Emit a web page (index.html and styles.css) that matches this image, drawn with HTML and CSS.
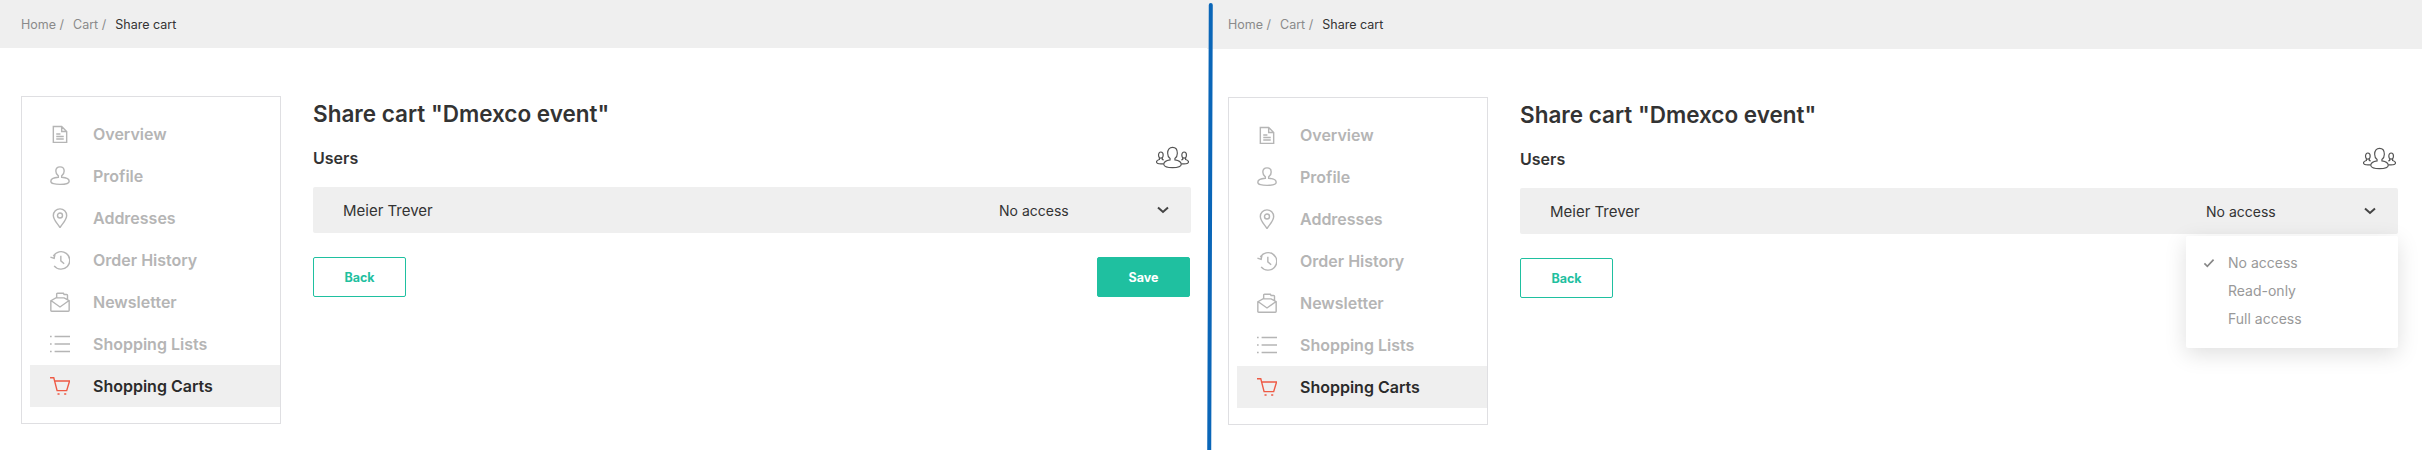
FILE: index.html
```html
<!DOCTYPE html>
<html lang="en">
<head>
  <meta charset="UTF-8" />
  <meta name="viewport" content="width=device-width, initial-scale=1.0" />
  <title>Share cart</title>
  <link rel="stylesheet" href="styles.css">
</head>
<body>
  <svg class="defs" aria-hidden="true">
    <symbol id="i-doc" viewBox="0 0 24 24"><path d="M4 3h10l6 6v13H4z M14 3v6h6 M7.5 12h5 M7.5 15h9 M7.5 18h9"/></symbol>
    <symbol id="i-user" viewBox="0 0 24 24"><path d="M12 1c3.4 0 5 2.500 5 5 0 2.600-1.500 4.800-3 5.800v1.700c5 .4 9 2.200 9 4.700 0 2.800-5 3.800-11 3.800S1 21.200 1 18.200c0-2.500 4-4.300 9-4.700v-1.700c-1.500-1-3-3.200-3-5.800 0-2.500 1.600-5 5-5z"/></symbol>
    <symbol id="i-pin" viewBox="0 0 24 24"><path d="M12 23.500C8 17.500 4 14 4 9a8 8 0 0 1 16 0c0 5-4 8.500-8 14.500z"/><circle cx="12" cy="9" r="3"/></symbol>
    <symbol id="i-history" viewBox="0 0 24 24"><path d="M4 7.500A10.500 10.500 0 1 1 5 19 M0.500 8.500l4.500 1.500 1-5 M13 7v6l4 3.500"/></symbol>
    <symbol id="i-mail" viewBox="0 0 24 24"><path d="M1 10.500l6-3.500h10l6 3.500V22q0 1-1 1H2q-1 0-1-1z M1.500 10.500l10.500 7.500 10.500-7.500 M8 7V2.500q0-1 1-1h7l1 1.500h3q1 0 1 1v5"/></symbol>
    <symbol id="i-list" viewBox="0 0 24 24"><path d="M5.500 3h18.500 M5.500 12h18.500 M5.500 21h18.500 M0 3h2 M0 12h2 M0 21h2"/></symbol>
    <symbol id="i-cart" viewBox="0 0 24 24"><path d="M0 2h4.500l4 15.500h11.500L23.500 6H5.500 M9 21.500h2.500 M17 21.500h2.500"/></symbol>
    <symbol id="i-users" viewBox="0 0 34 24"><path d="M17 1c3 0 5 2.400 5 6 0 2.600-1.200 4.500-2.500 5.500V14c4 .6 6.500 2 6.500 4.500 0 2.500-4 3.500-9 3.500s-9-1-9-3.500c0-2.500 2.500-3.900 6.500-4.500v-1.500C13.200 11.500 12 9.600 12 7c0-3.600 2-6 5-6z"/><ellipse cx="5" cy="9" rx="2.400" ry="3.200"/><ellipse cx="29" cy="9" rx="2.400" ry="3.200"/><path d="M3.500 12v1.500C1.500 14 .5 15 .5 16s1.500 2 4.500 2h3 M6.500 12v1.500l1.500.4 M30.500 12v1.500c2 .5 3 1.500 3 2.500s-1.500 2-4.500 2h-3 M27.500 12v1.500l-1.500.4"/></symbol>
    <symbol id="i-chevron" viewBox="0 0 12 8"><path d="M1 1.500l5 4.500 5-4.500"/></symbol>
    <symbol id="i-check" viewBox="0 0 14 12"><path d="M1.500 6.500l3.500 3.500 7.500-8"/></symbol>
  </svg>

  <div class="screens">
    <section class="screen screen-closed">
      <div class="crumbs"><a>Home /</a><a>Cart /</a><span>Share cart</span></div>
      <div class="content">
        <ul class="side">
          <li><svg class="ico"><use href="#i-doc"/></svg>Overview</li>
          <li><svg class="ico"><use href="#i-user"/></svg>Profile</li>
          <li><svg class="ico"><use href="#i-pin"/></svg>Addresses</li>
          <li><svg class="ico"><use href="#i-history"/></svg>Order History</li>
          <li><svg class="ico"><use href="#i-mail"/></svg>Newsletter</li>
          <li><svg class="ico"><use href="#i-list"/></svg>Shopping Lists</li>
          <li class="active"><svg class="ico"><use href="#i-cart"/></svg>Shopping Carts</li>
        </ul>
        <div class="main">
          <h1>Share cart "Dmexco event"</h1>
          <div class="users-head">
            <h2>Users</h2>
            <svg class="users-ico"><use href="#i-users"/></svg>
          </div>
          <div class="user-row">
            <span class="user-name">Meier Trever</span>
            <span class="access">No access</span>
            <svg class="chevron"><use href="#i-chevron"/></svg>
          </div>
          <div class="actions">
            <button class="btn btn-back">Back</button>
            <button class="btn btn-save">Save</button>
          </div>
        </div>
      </div>
    </section>

    <section class="screen screen-open">
      <div class="crumbs"><a>Home /</a><a>Cart /</a><span>Share cart</span></div>
      <div class="content">
        <ul class="side">
          <li><svg class="ico"><use href="#i-doc"/></svg>Overview</li>
          <li><svg class="ico"><use href="#i-user"/></svg>Profile</li>
          <li><svg class="ico"><use href="#i-pin"/></svg>Addresses</li>
          <li><svg class="ico"><use href="#i-history"/></svg>Order History</li>
          <li><svg class="ico"><use href="#i-mail"/></svg>Newsletter</li>
          <li><svg class="ico"><use href="#i-list"/></svg>Shopping Lists</li>
          <li class="active"><svg class="ico"><use href="#i-cart"/></svg>Shopping Carts</li>
        </ul>
        <div class="main">
          <h1>Share cart "Dmexco event"</h1>
          <div class="users-head">
            <h2>Users</h2>
            <svg class="users-ico"><use href="#i-users"/></svg>
          </div>
          <div class="user-row">
            <span class="user-name">Meier Trever</span>
            <span class="access">No access</span>
            <svg class="chevron"><use href="#i-chevron"/></svg>
            <ul class="menu">
              <li><svg class="check"><use href="#i-check"/></svg>No access</li>
              <li>Read-only</li>
              <li>Full access</li>
            </ul>
          </div>
          <div class="actions">
            <button class="btn btn-back">Back</button>
          </div>
        </div>
      </div>
    </section>

    <div class="divider"></div>
  </div>
</body>
</html>
```

FILE: styles.css
```css
* {
  box-sizing: border-box;
}
html, body {
  margin: 0;
  height: 100%;
  overflow: hidden;
}
body {
  font-family: "Inter", sans-serif;
  color: #333;
  background: white;
}
.defs {
  display: none;
}
.screens {
  position: relative;
  display: flex;
  height: 450px;
}
.screen-closed {
  width: 1207px;
  padding-right: 16px;
}
.screen-open {
  width: 1215px;
  padding-right: 24px;
}

/* breadcrumb bar */
.crumbs {
  display: flex;
  align-items: center;
  gap: 9px;
  height: 48px;
  margin-right: -24px;
  padding-left: 21px;
  background: #efefef;
  font-size: 12.5px;
  color: #8a8a8a;
}
.crumbs span {
  color: #333;
}
.screen-open .crumbs {
  height: 49px;
}
.screen-closed .crumbs {
  margin-right: -16px;
}

.content {
  display: flex;
  align-items: flex-start;
  gap: 32px;
  padding: 48px 0 0 21px;
}

/* account sidebar */
.side {
  flex: none;
  width: 260px;
  margin: 0;
  padding: 16px 0 16px 8px;
  list-style: none;
  border: 1px solid #dfdfe2;
}
.side li {
  display: flex;
  align-items: center;
  height: 42px;
  font-size: 16px;
  font-weight: 600;
  color: #b5b5b5;
}
.side li.active {
  background: #efefef;
  color: #2b2b2b;
}
.ico {
  flex: none;
  width: 20px;
  height: 20px;
  margin: 0 23px 0 20px;
  fill: none;
  stroke: #b5b5b5;
  stroke-width: 1.7;
}
.active .ico {
  stroke: #ee5a45;
}

/* main column */
.main {
  flex: 1;
}
h1 {
  margin: 5px 0 0;
  font-size: 22.5px;
  line-height: 26px;
  font-weight: 600;
  color: #333;
}
.users-head {
  display: flex;
  align-items: center;
  justify-content: space-between;
  height: 24px;
  margin-top: 19px;
  padding-right: 2px;
}
h2 {
  margin: 0;
  font-size: 16px;
  font-weight: 600;
  color: #333;
}
.users-ico {
  width: 33px;
  height: 24px;
  fill: none;
  stroke: #555;
  stroke-width: 1.2;
}
.user-row {
  position: relative;
  display: flex;
  align-items: center;
  height: 46px;
  margin-top: 17px;
  padding: 0 22px 0 30px;
  background: #efefef;
  border-radius: 2px;
  font-size: 15px;
}
.user-name {
  flex: 1;
}
.access {
  width: 158px;
  font-size: 14px;
}
.chevron {
  width: 12px;
  height: 8px;
  fill: none;
  stroke: #444;
  stroke-width: 2;
}

/* access dropdown */
.menu {
  position: absolute;
  top: 48px;
  right: 0;
  width: 212px;
  height: 112px;
  margin: 0;
  padding: 13px 0 0 42px;
  list-style: none;
  background: white;
  border-radius: 2px;
  box-shadow: 0 6px 22px rgba(0,0,0,0.13);
  font-size: 14px;
  color: #999;
}
.menu li {
  position: relative;
  height: 28px;
  line-height: 28px;
}
.check {
  position: absolute;
  left: -25px;
  top: 9px;
  width: 12px;
  height: 10px;
  fill: none;
  stroke: #888;
  stroke-width: 2;
}

.actions {
  display: flex;
  justify-content: space-between;
  margin-top: 24px;
  padding-right: 1px;
}
.btn {
  width: 93px;
  height: 40px;
  padding: 0;
  font-family: inherit;
  font-size: 12.5px;
  font-weight: 700;
  border: 1px solid #1fc0a0;
  border-radius: 2px;
  cursor: pointer;
}
.btn-back {
  background: white;
  color: #1fc0a0;
}
.btn-save {
  background: #1fc0a0;
  color: white;
}

.divider {
  position: absolute;
  top: 3px;
  bottom: -2px;
  left: 1208px;
  width: 4px;
  background: #0a66b8;
  border-radius: 2px 2px 0 0;
  transform: rotate(0.2deg);
}
```
